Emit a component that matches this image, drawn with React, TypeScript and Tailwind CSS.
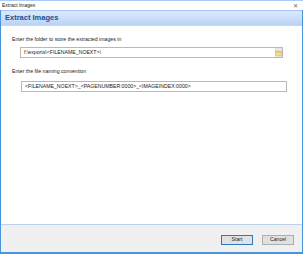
import React from 'react'

const FONT = { fontFamily: '"Liberation Sans", "Noto Sans", Arial, sans-serif' }

function FolderIcon() {
  return (
    <svg width="7" height="6" viewBox="0 0 7 6">
      <path d="M0.5 1 H2.5 L3 1.6 H6.5 V5.5 H0.5 Z" fill="#e8c95a" stroke="#c9a23a" strokeWidth="0.5" />
      <path d="M0.5 2.4 H6.5 V5.5 H0.5 Z" fill="#f6dd7d" />
    </svg>
  )
}

export default function App() {
  return (
    <div className="w-[303px] h-[254px] flex flex-col bg-white text-black" style={FONT}>
      {/* title bar */}
      <div className="h-[10px] flex items-center justify-between border-t border-[#a9cdf3] pl-[2px] pr-[5px]">
        <span className="text-[5px] leading-none text-[#222]">Extract Images</span>
        <span className="text-[6px] leading-none text-[#666]">✕</span>
      </div>

      <div className="flex-1 flex flex-col border-x border-b-2 border-[#4a94de]">
        {/* header band */}
        <div className="h-[16px] flex items-center pl-[4px] bg-gradient-to-b from-[#dce9fb] to-[#b9d4f6] border-t border-[#a6c6ee] border-b border-b-[#c3d8f3]">
          <span className="text-[7.5px] font-bold leading-none text-[#1d4f91]">Extract Images</span>
        </div>

        {/* content */}
        <div className="flex-1 flex flex-col pl-[11px] pr-[14px] pt-[11px]">
          <div className="text-[5.2px] leading-none text-[#222]">Enter the folder to store the extracted images in</div>
          <div className="mt-[5px] ml-[8px] mr-[5px] h-[11px] flex items-center border border-[#b8b8b8]">
            <span className="flex-1 pl-[3px] text-[5.2px] leading-none text-[#222]">f:\exports\&lt;FILENAME_NOEXT&gt;\</span>
            <span className="w-[7px] h-full flex items-center justify-center bg-[#e6e6e6]">
              <FolderIcon />
            </span>
          </div>

          <div className="mt-[11px] text-[5.2px] leading-none text-[#222]">Enter the file naming convention</div>
          <div className="mt-[7px] ml-[9px] mr-[1px] h-[11px] flex items-center border border-[#b8b8b8]">
            <span className="pl-[3px] text-[5.2px] leading-none text-[#222]">
              &lt;FILENAME_NOEXT&gt;_&lt;PAGENUMBER:0000&gt;_&lt;IMAGEINDEX:0000&gt;
            </span>
          </div>
        </div>

        {/* footer */}
        <div className="h-[28px] flex items-center justify-end gap-[9px] pr-[8px] pt-[2px] bg-[#f0f0f0] border-t border-[#bcd3ee]">
          <button className="w-[32px] h-[10px] flex items-center justify-center bg-[#e1e1e1] border border-[#2f78c4] text-[5.2px] leading-none text-[#222]">
            Start
          </button>
          <button className="w-[32px] h-[10px] flex items-center justify-center bg-[#e1e1e1] border border-[#adadad] text-[5.2px] leading-none text-[#222]">
            Cancel
          </button>
        </div>
      </div>
    </div>
  )
}
